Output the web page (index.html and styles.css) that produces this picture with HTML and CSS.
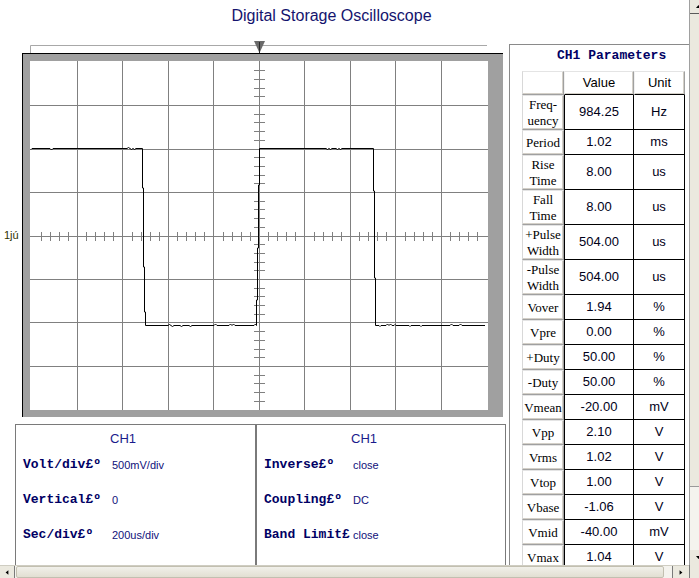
FILE: index.html
```html
<!DOCTYPE html>
<html>
<head>
<meta charset="utf-8">
<title>Digital Storage Oscilloscope</title>
<link rel="stylesheet" href="styles.css">
</head>
<body>
<div class="window">
  <div class="viewport">
    <h1 class="title">Digital Storage Oscilloscope</h1>
    <div class="main">
      <div class="left">
        <svg class="ruler" width="509" height="12" viewBox="0 0 509 12">
          <path d="M30.5 12V4.5H487" stroke="#a8a8a8" fill="none"/>
          <polygon points="254,0 265,0 259.5,12" fill="#6a6a6a"/>
          <line x1="259.5" y1="1" x2="259.5" y2="12" stroke="#2a2a2a"/>
        </svg>
        <div class="scope-row">
          <div class="level">1jú</div>
          <div class="frame">
            <svg class="grid" width="458" height="349" viewBox="0 0 458 349">
              <path class="lines" d="M47.5 0V349M92.5 0V349M138.5 0V349M183.5 0V349M229.5 0V349M274.5 0V349M320.5 0V349M365.5 0V349M411.5 0V349M0 44.5H458M0 88.5H458M0 131.5H458M0 175.5H458M0 218.5H458M0 261.5H458M0 305.5H458"/>
              <path class="lines" d="M11.5 171v9M20.5 171v9M29.5 171v9M38.5 171v9M56.5 171v9M65.5 171v9M74.5 171v9M83.5 171v9M102.5 171v9M111.5 171v9M120.5 171v9M129.5 171v9M147.5 171v9M156.5 171v9M165.5 171v9M174.5 171v9M193.5 171v9M202.5 171v9M211.5 171v9M220.5 171v9M238.5 171v9M247.5 171v9M256.5 171v9M265.5 171v9M284.5 171v9M293.5 171v9M302.5 171v9M311.5 171v9M329.5 171v9M338.5 171v9M347.5 171v9M356.5 171v9M375.5 171v9M384.5 171v9M393.5 171v9M402.5 171v9M420.5 171v9M429.5 171v9M438.5 171v9M447.5 171v9"/>
              <path class="lines" d="M224 9.5h11M224 18.5h11M224 27.5h11M224 35.5h11M224 53.5h11M224 61.5h11M224 70.5h11M224 79.5h11M224 96.5h11M224 105.5h11M224 114.5h11M224 122.5h11M224 140.5h11M224 148.5h11M224 157.5h11M224 166.5h11M224 183.5h11M224 192.5h11M224 201.5h11M224 209.5h11M224 227.5h11M224 235.5h11M224 244.5h11M224 253.5h11M224 270.5h11M224 279.5h11M224 288.5h11M224 296.5h11M224 314.5h11M224 322.5h11M224 331.5h11M224 340.5h11"/>
              <path class="wave" d="M1 88.5l1-1H20l1.5 1.5 1.5-1.5H97l1.5-1 1.5 1 1.5 1 1.5-1 1.5 1 1.5-1H112.5V127H113.5V206H114.5V251H115.5V264.5H138l1.5-1 1.5 1 1.5 1 1.5-1H150l1.5 1 1.5-1H159l1.5 1 1.5-1H184l1.5-1.5 1.5 1.5H199l1.5-1.5 1.5 1.5 1.5-1.5 1.5 1.5H224l1.5-1.5 1 1.5H226.5V239H227.5V187H228.5V124H229.5V87.5H296l1.5 1 1.5-1 1.5 1 1.5-1H306l1.5 1 1.5-1 1.5 1 1.5-1H343.5V130H344.5V217H345.5V264.5H349l1 1 1-1H356l1.5-1.5 1.5 1.5 1.5-1.5 1.5 1.5H364l1-1 1 1H379l1 1 1-1H390l1 1 1-1H420l1.5-1.5 1.5 1.5H429l1.5-1.5 1.5 1.5H455"/>
            </svg>
          </div>
        </div>
        <div class="boxes">
          <div class="box box1">
            <div class="box-title">CH1</div>
            <div class="fields">
              <span class="lbl">Volt/div£º</span><span class="val">500mV/div</span>
              <span class="lbl">Vertical£º</span><span class="val">0</span>
              <span class="lbl">Sec/div£º</span><span class="val">200us/div</span>
              <span class="lbl lbl-last">Position£º</span><span class="val"></span>
            </div>
          </div>
          <div class="box box2">
            <div class="box-title">CH1</div>
            <div class="fields">
              <span class="lbl">Inverse£º</span><span class="val">close</span>
              <span class="lbl">Coupling£º</span><span class="val">DC</span>
              <span class="lbl">Band Limit£</span><span class="val">close</span>
              <span class="lbl lbl-last">Trigger£º</span><span class="val"></span>
            </div>
          </div>
        </div>
      </div>
      <div class="params">
        <div class="params-title">CH1 Parameters</div>
        <table class="ptable">
          <tr class="rh"><th class="btn c1"></th><th class="btn hd c2">Value</th><th class="btn hd c3">Unit</th></tr>
          <tr class="r2"><td class="btn nm">Freq-<br>uency</td><td class="v">984.25</td><td class="u">Hz</td></tr>
          <tr class="r1"><td class="btn nm">Period</td><td class="v">1.02</td><td class="u">ms</td></tr>
          <tr class="r2"><td class="btn nm">Rise<br>Time</td><td class="v">8.00</td><td class="u">us</td></tr>
          <tr class="r2"><td class="btn nm">Fall<br>Time</td><td class="v">8.00</td><td class="u">us</td></tr>
          <tr class="r2"><td class="btn nm">+Pulse<br>Width</td><td class="v">504.00</td><td class="u">us</td></tr>
          <tr class="r2"><td class="btn nm">-Pulse<br>Width</td><td class="v">504.00</td><td class="u">us</td></tr>
          <tr class="r1"><td class="btn nm">Vover</td><td class="v">1.94</td><td class="u">%</td></tr>
          <tr class="r1"><td class="btn nm">Vpre</td><td class="v">0.00</td><td class="u">%</td></tr>
          <tr class="r1"><td class="btn nm">+Duty</td><td class="v">50.00</td><td class="u">%</td></tr>
          <tr class="r1"><td class="btn nm">-Duty</td><td class="v">50.00</td><td class="u">%</td></tr>
          <tr class="r1"><td class="btn nm">Vmean</td><td class="v">-20.00</td><td class="u">mV</td></tr>
          <tr class="r1"><td class="btn nm">Vpp</td><td class="v">2.10</td><td class="u">V</td></tr>
          <tr class="r1"><td class="btn nm">Vrms</td><td class="v">1.02</td><td class="u">V</td></tr>
          <tr class="r1"><td class="btn nm">Vtop</td><td class="v">1.00</td><td class="u">V</td></tr>
          <tr class="r1"><td class="btn nm">Vbase</td><td class="v">-1.06</td><td class="u">V</td></tr>
          <tr class="r1"><td class="btn nm">Vmid</td><td class="v">-40.00</td><td class="u">mV</td></tr>
          <tr class="r1"><td class="btn nm">Vmax</td><td class="v">1.04</td><td class="u">V</td></tr>
        </table>
      </div>
    </div>
  </div>
  <div class="vscroll">
    <div class="sbtn vbtn"><svg width="17" height="13" viewBox="0 0 17 13"><polygon points="6,8 11,8 8.5,5" fill="#000"/></svg></div>
    <div class="vthumb"></div>
    <div class="vtrack"></div>
    <div class="sbtn vbtn"><svg width="17" height="15" viewBox="0 0 17 15"><polygon points="6,6 11,6 8.5,9" fill="#000"/></svg></div>
  </div>
  <div class="hscroll">
    <div class="sbtn hbtn"><svg width="15" height="13" viewBox="0 0 15 13"><polygon points="9,4 9,9 6,6.5" fill="#000"/></svg></div>
    <div class="hthumb"></div>
    <div class="htrack"></div>
    <div class="sbtn hbtn hbtn-r"><svg width="17" height="13" viewBox="0 0 17 13"><polygon points="7,4 7,9 10,6.5" fill="#000"/></svg></div>
  </div>
  <div class="corner"></div>
</div>
</body>
</html>
```

FILE: styles.css
```css
* { box-sizing: border-box; }
html, body { margin: 0; padding: 0; background: #fff; }
body {
  width: 699px;
  height: 578px;
  overflow: hidden;
  font-family: "Liberation Sans", Arial, sans-serif;
}
.window {
  display: grid;
  grid-template-columns: 689px 10px;
  grid-template-rows: 565px 13px;
  width: 699px;
  height: 578px;
}
.viewport { overflow: hidden; }

.title {
  margin: 0;
  height: 41px;
  padding: 6px 26px 0 0;
  font: normal 16px/20px "Liberation Sans", Arial, sans-serif;
  color: #14146e;
  text-align: center;
}
.main { display: flex; align-items: flex-start; }
.left { width: 509px; flex: none; }
.ruler { display: block; }

.scope-row { display: flex; align-items: center; }
.level {
  width: 22px;
  padding-left: 4px;
  font-size: 11px;
  line-height: 12px;
  color: #303000;
}
.frame {
  border-left: 1px solid #000;
  border-top: 1px solid #000;
  background: #a0a0a0;
  padding: 7px 15px 7px 7px;
}
.grid { display: block; background: #fff; }
.grid .lines { stroke: #808080; stroke-width: 1; fill: none; }
.grid .wave { stroke: #000; stroke-width: 1; fill: none; }

.boxes { display: flex; margin-top: 7px; padding-left: 15px; }
.box { border: 1px solid #7a7a7a; height: 200px; flex: none; }
.box1 { width: 241px; }
.box2 { width: 250px; }
.box-title {
  height: 22px;
  padding: 6px 0 0 94px;
  font-size: 13px;
  line-height: 16px;
  color: #1a1a8c;
}
.fields {
  display: grid;
  grid-template-columns: 89px auto;
  grid-auto-rows: 35px;
  align-items: center;
  padding-left: 7px;
}
.lbl {
  font: bold 13px/16px "Liberation Mono", monospace;
  color: #000064;
  white-space: nowrap;
}
.lbl-last { padding-top: 4px; }
.val { font-size: 11px; line-height: 14px; color: #10107a; white-space: nowrap; }

.params {
  margin-top: 3px;
  width: 205px;
  height: 560px;
  flex: none;
  border-left: 1px solid #8a8a8a;
  border-top: 1px solid #8a8a8a;
}
.params-title {
  height: 21px;
  margin-bottom: 5px;
  padding-left: 47px;
  font: bold 13px/21px "Liberation Mono", monospace;
  color: #000064;
  white-space: nowrap;
}
.ptable {
  margin-left: 12px;
  width: 163px;
  table-layout: fixed;
  border-collapse: separate;
  border-spacing: 0;
}
.ptable th, .ptable td {
  padding: 0;
  text-align: center;
  vertical-align: middle;
}
.c1 { width: 42px; }
.c2 { width: 70px; }
.c3 { width: 51px; }
.rh { height: 24px; }
.r1 { height: 25px; }
.r2 { height: 35px; }
.btn {
  background: #fff;
  border-top: 1px solid #e4e4e4;
  border-left: 1px solid #d8d8d8;
  border-right: 1px solid #a0a0a0;
  border-bottom: 1px solid #a0a0a0;
  box-shadow: inset -1px -1px 0 #d4d0c8;
}
.hd {
  font: normal 13px/16px "Liberation Sans", Arial, sans-serif;
  color: #000;
  border-bottom: 1px solid #000;
  border-left-color: #f0f0f0;
  padding-top: 2px;
}
.nm {
  font: 13px/16px "Liberation Serif", "Times New Roman", serif;
  color: #000;
}
.v, .u {
  font: 13px/16px "Liberation Sans", Arial, sans-serif;
  color: #000018;
  border-right: 1px solid #000;
  border-bottom: 1px solid #000;
}
.v { border-left: 1px solid #000; }

/* scrollbars */
.vscroll {
  width: 10px;
  overflow: hidden;
  display: flex;
  flex-direction: column;
  background: #f4f3ee;
  border-left: 1px solid #a0a0a0;
}
.vscroll > * { width: 17px; flex: none; }
.vbtn { height: 13px; }
.vbtn:last-child { height: 15px; margin-top: auto; }
.vthumb {
  height: 474px;
  background: #ebe9df;
  border-top: 1px solid #5a5a5a;
  border-bottom: 1px solid #9a9a9a;
}
.vtrack { flex: 1; }
.sbtn {
  background: #ebe9df;
  display: flex;
}
.sbtn svg { display: block; }

.hscroll {
  display: flex;
  background: #f4f3ee;
  border-top: 1px solid #cfcdc2;
}
.hbtn { width: 15px; flex: none; border-right: 1px solid #7a7a7a; }
.hbtn-r { width: 17px; border-right: none; border-left: 1px solid #7a7a7a; }
.hthumb {
  width: 648px;
  margin-left: 1px;
  background: linear-gradient(#f1f0ea, #e2dfd2);
  border: 1px solid #c2bfb0;
  border-radius: 2px;
}
.htrack { flex: 1; }
.corner { background: #ebe9df; border-left: 1px solid #7a7a7a; }
```
